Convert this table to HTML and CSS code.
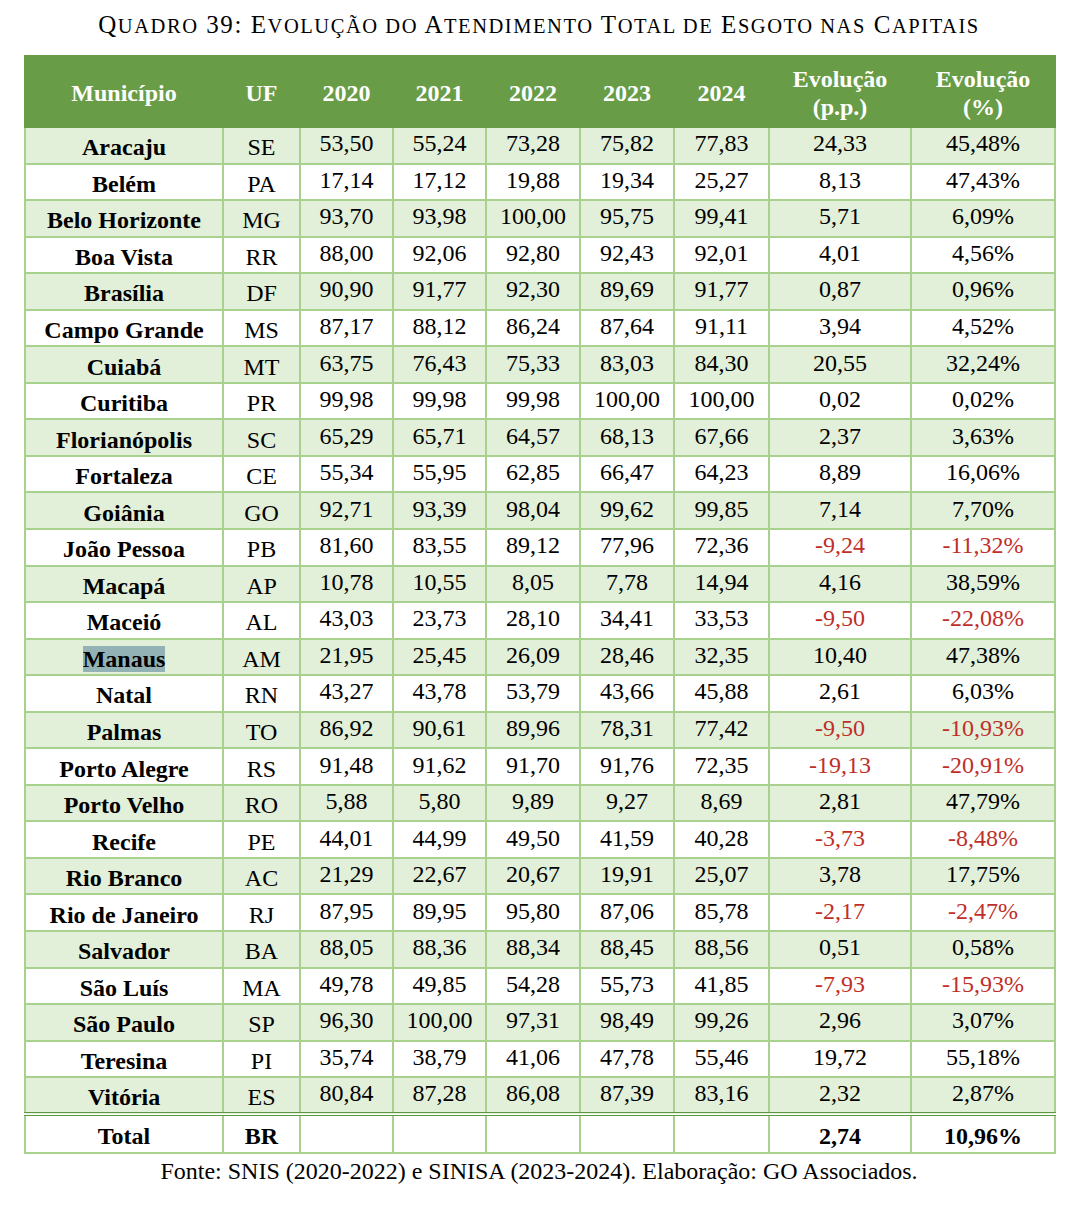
FILE: index.html
```html
<!DOCTYPE html>
<html lang="pt-BR">
<head>
<meta charset="utf-8">
<title>Quadro 39</title>
<link rel="stylesheet" href="styles.css">
</head>
<body>
<div class="page">
  <h1 class="title">Q<span class="sc">uadro</span> 39: E<span class="sc">volução do</span> A<span class="sc">tendimento</span> T<span class="sc">otal de</span> E<span class="sc">sgoto nas</span> C<span class="sc">apitais</span></h1>
  <table class="grid">
    <colgroup>
      <col class="c-mun"><col class="c-uf"><col class="c-yr"><col class="c-yr"><col class="c-yr2"><col class="c-yr2"><col class="c-yr3"><col class="c-ev1"><col class="c-ev2">
    </colgroup>
    <thead>
      <tr>
        <th>Município</th><th>UF</th><th>2020</th><th>2021</th><th>2022</th><th>2023</th><th>2024</th><th>Evolução<br>(p.p.)</th><th>Evolução<br>(%)</th>
      </tr>
    </thead>
    <tbody>
      <tr class="alt"><td class="name">Aracaju</td><td class="uf">SE</td><td>53,50</td><td>55,24</td><td>73,28</td><td>75,82</td><td>77,83</td><td>24,33</td><td>45,48%</td></tr>
      <tr><td class="name">Belém</td><td class="uf">PA</td><td>17,14</td><td>17,12</td><td>19,88</td><td>19,34</td><td>25,27</td><td>8,13</td><td>47,43%</td></tr>
      <tr class="alt"><td class="name">Belo Horizonte</td><td class="uf">MG</td><td>93,70</td><td>93,98</td><td>100,00</td><td>95,75</td><td>99,41</td><td>5,71</td><td>6,09%</td></tr>
      <tr><td class="name">Boa Vista</td><td class="uf">RR</td><td>88,00</td><td>92,06</td><td>92,80</td><td>92,43</td><td>92,01</td><td>4,01</td><td>4,56%</td></tr>
      <tr class="alt"><td class="name">Brasília</td><td class="uf">DF</td><td>90,90</td><td>91,77</td><td>92,30</td><td>89,69</td><td>91,77</td><td>0,87</td><td>0,96%</td></tr>
      <tr><td class="name">Campo Grande</td><td class="uf">MS</td><td>87,17</td><td>88,12</td><td>86,24</td><td>87,64</td><td>91,11</td><td>3,94</td><td>4,52%</td></tr>
      <tr class="alt"><td class="name">Cuiabá</td><td class="uf">MT</td><td>63,75</td><td>76,43</td><td>75,33</td><td>83,03</td><td>84,30</td><td>20,55</td><td>32,24%</td></tr>
      <tr><td class="name">Curitiba</td><td class="uf">PR</td><td>99,98</td><td>99,98</td><td>99,98</td><td>100,00</td><td>100,00</td><td>0,02</td><td>0,02%</td></tr>
      <tr class="alt"><td class="name">Florianópolis</td><td class="uf">SC</td><td>65,29</td><td>65,71</td><td>64,57</td><td>68,13</td><td>67,66</td><td>2,37</td><td>3,63%</td></tr>
      <tr><td class="name">Fortaleza</td><td class="uf">CE</td><td>55,34</td><td>55,95</td><td>62,85</td><td>66,47</td><td>64,23</td><td>8,89</td><td>16,06%</td></tr>
      <tr class="alt"><td class="name">Goiânia</td><td class="uf">GO</td><td>92,71</td><td>93,39</td><td>98,04</td><td>99,62</td><td>99,85</td><td>7,14</td><td>7,70%</td></tr>
      <tr><td class="name">João Pessoa</td><td class="uf">PB</td><td>81,60</td><td>83,55</td><td>89,12</td><td>77,96</td><td>72,36</td><td class="neg">-9,24</td><td class="neg">-11,32%</td></tr>
      <tr class="alt"><td class="name">Macapá</td><td class="uf">AP</td><td>10,78</td><td>10,55</td><td>8,05</td><td>7,78</td><td>14,94</td><td>4,16</td><td>38,59%</td></tr>
      <tr><td class="name">Maceió</td><td class="uf">AL</td><td>43,03</td><td>23,73</td><td>28,10</td><td>34,41</td><td>33,53</td><td class="neg">-9,50</td><td class="neg">-22,08%</td></tr>
      <tr class="alt"><td class="name"><span class="sel">Manaus</span></td><td class="uf">AM</td><td>21,95</td><td>25,45</td><td>26,09</td><td>28,46</td><td>32,35</td><td>10,40</td><td>47,38%</td></tr>
      <tr><td class="name">Natal</td><td class="uf">RN</td><td>43,27</td><td>43,78</td><td>53,79</td><td>43,66</td><td>45,88</td><td>2,61</td><td>6,03%</td></tr>
      <tr class="alt"><td class="name">Palmas</td><td class="uf">TO</td><td>86,92</td><td>90,61</td><td>89,96</td><td>78,31</td><td>77,42</td><td class="neg">-9,50</td><td class="neg">-10,93%</td></tr>
      <tr><td class="name">Porto Alegre</td><td class="uf">RS</td><td>91,48</td><td>91,62</td><td>91,70</td><td>91,76</td><td>72,35</td><td class="neg">-19,13</td><td class="neg">-20,91%</td></tr>
      <tr class="alt"><td class="name">Porto Velho</td><td class="uf">RO</td><td>5,88</td><td>5,80</td><td>9,89</td><td>9,27</td><td>8,69</td><td>2,81</td><td>47,79%</td></tr>
      <tr><td class="name">Recife</td><td class="uf">PE</td><td>44,01</td><td>44,99</td><td>49,50</td><td>41,59</td><td>40,28</td><td class="neg">-3,73</td><td class="neg">-8,48%</td></tr>
      <tr class="alt"><td class="name">Rio Branco</td><td class="uf">AC</td><td>21,29</td><td>22,67</td><td>20,67</td><td>19,91</td><td>25,07</td><td>3,78</td><td>17,75%</td></tr>
      <tr><td class="name">Rio de Janeiro</td><td class="uf">RJ</td><td>87,95</td><td>89,95</td><td>95,80</td><td>87,06</td><td>85,78</td><td class="neg">-2,17</td><td class="neg">-2,47%</td></tr>
      <tr class="alt"><td class="name">Salvador</td><td class="uf">BA</td><td>88,05</td><td>88,36</td><td>88,34</td><td>88,45</td><td>88,56</td><td>0,51</td><td>0,58%</td></tr>
      <tr><td class="name">São Luís</td><td class="uf">MA</td><td>49,78</td><td>49,85</td><td>54,28</td><td>55,73</td><td>41,85</td><td class="neg">-7,93</td><td class="neg">-15,93%</td></tr>
      <tr class="alt"><td class="name">São Paulo</td><td class="uf">SP</td><td>96,30</td><td>100,00</td><td>97,31</td><td>98,49</td><td>99,26</td><td>2,96</td><td>3,07%</td></tr>
      <tr><td class="name">Teresina</td><td class="uf">PI</td><td>35,74</td><td>38,79</td><td>41,06</td><td>47,78</td><td>55,46</td><td>19,72</td><td>55,18%</td></tr>
      <tr class="alt"><td class="name">Vitória</td><td class="uf">ES</td><td>80,84</td><td>87,28</td><td>86,08</td><td>87,39</td><td>83,16</td><td>2,32</td><td>2,87%</td></tr>
    </tbody>
    <tfoot>
      <tr class="total"><td class="name">Total</td><td class="uf b">BR</td><td></td><td></td><td></td><td></td><td></td><td class="b">2,74</td><td class="b">10,96%</td></tr>
    </tfoot>
  </table>
  <p class="source">Fonte: SNIS (2020-2022) e SINISA (2023-2024). Elaboração: GO Associados.</p>
</div>
</body>
</html>
```

FILE: styles.css
```css
html, body {
  margin: 0;
  padding: 0;
  background: #ffffff;
}

.page {
  font-family: "Liberation Serif", "Times New Roman", serif;
  color: #000000;
  padding: 0 22px 0 24px;
}

.title {
  margin: 0;
  width: 1030px;
  height: 55px;
  box-sizing: border-box;
  padding: 3px 0 8px 0;
  line-height: 44px;
  text-align: center;
  font-size: 25px;
  font-weight: normal;
  letter-spacing: 1.55px;
  white-space: nowrap;
}

.sc {
  font-size: 20.5px;
  text-transform: uppercase;
}

.grid {
  width: 1030px;
  border-collapse: collapse;
  table-layout: fixed;
  font-size: 24px;
}

.c-mun { width: 198px; }
.c-uf { width: 77px; }
.c-yr { width: 93px; }
.c-yr2 { width: 94px; }
.c-yr3 { width: 95px; }
.c-ev1 { width: 142px; }
.c-ev2 { width: 144px; }

.grid th {
  background: #699c47;
  color: #ffffff;
  font-weight: bold;
  height: 71px;
  line-height: 28px;
  padding: 3px 0 0 0;
  text-align: center;
  vertical-align: middle;
  border: 2px solid #699c47;
  box-sizing: border-box;
}

.grid td {
  height: 36.55px;
  padding: 0 0 4px 0;
  line-height: 28px;
  text-align: center;
  vertical-align: middle;
  border: 2px solid #a9d18e;
  box-sizing: border-box;
}

.grid td.name,
.grid td.uf {
  padding: 4px 0 0 0;
}

.grid td.name {
  font-weight: bold;
}

.grid tr.alt td {
  background: #e2efd9;
}

.grid td.neg {
  color: #bf2f2a;
}

.sel {
  background: #93b2b5;
}

.grid tr.total td {
  border-top: 4px double #5f9640;
  height: 39px;
  padding: 4px 0 0 0;
}

.grid td.b {
  font-weight: bold;
}

.source {
  margin: 0;
  width: 1030px;
  text-align: center;
  font-size: 24px;
  line-height: 34px;
}
```
